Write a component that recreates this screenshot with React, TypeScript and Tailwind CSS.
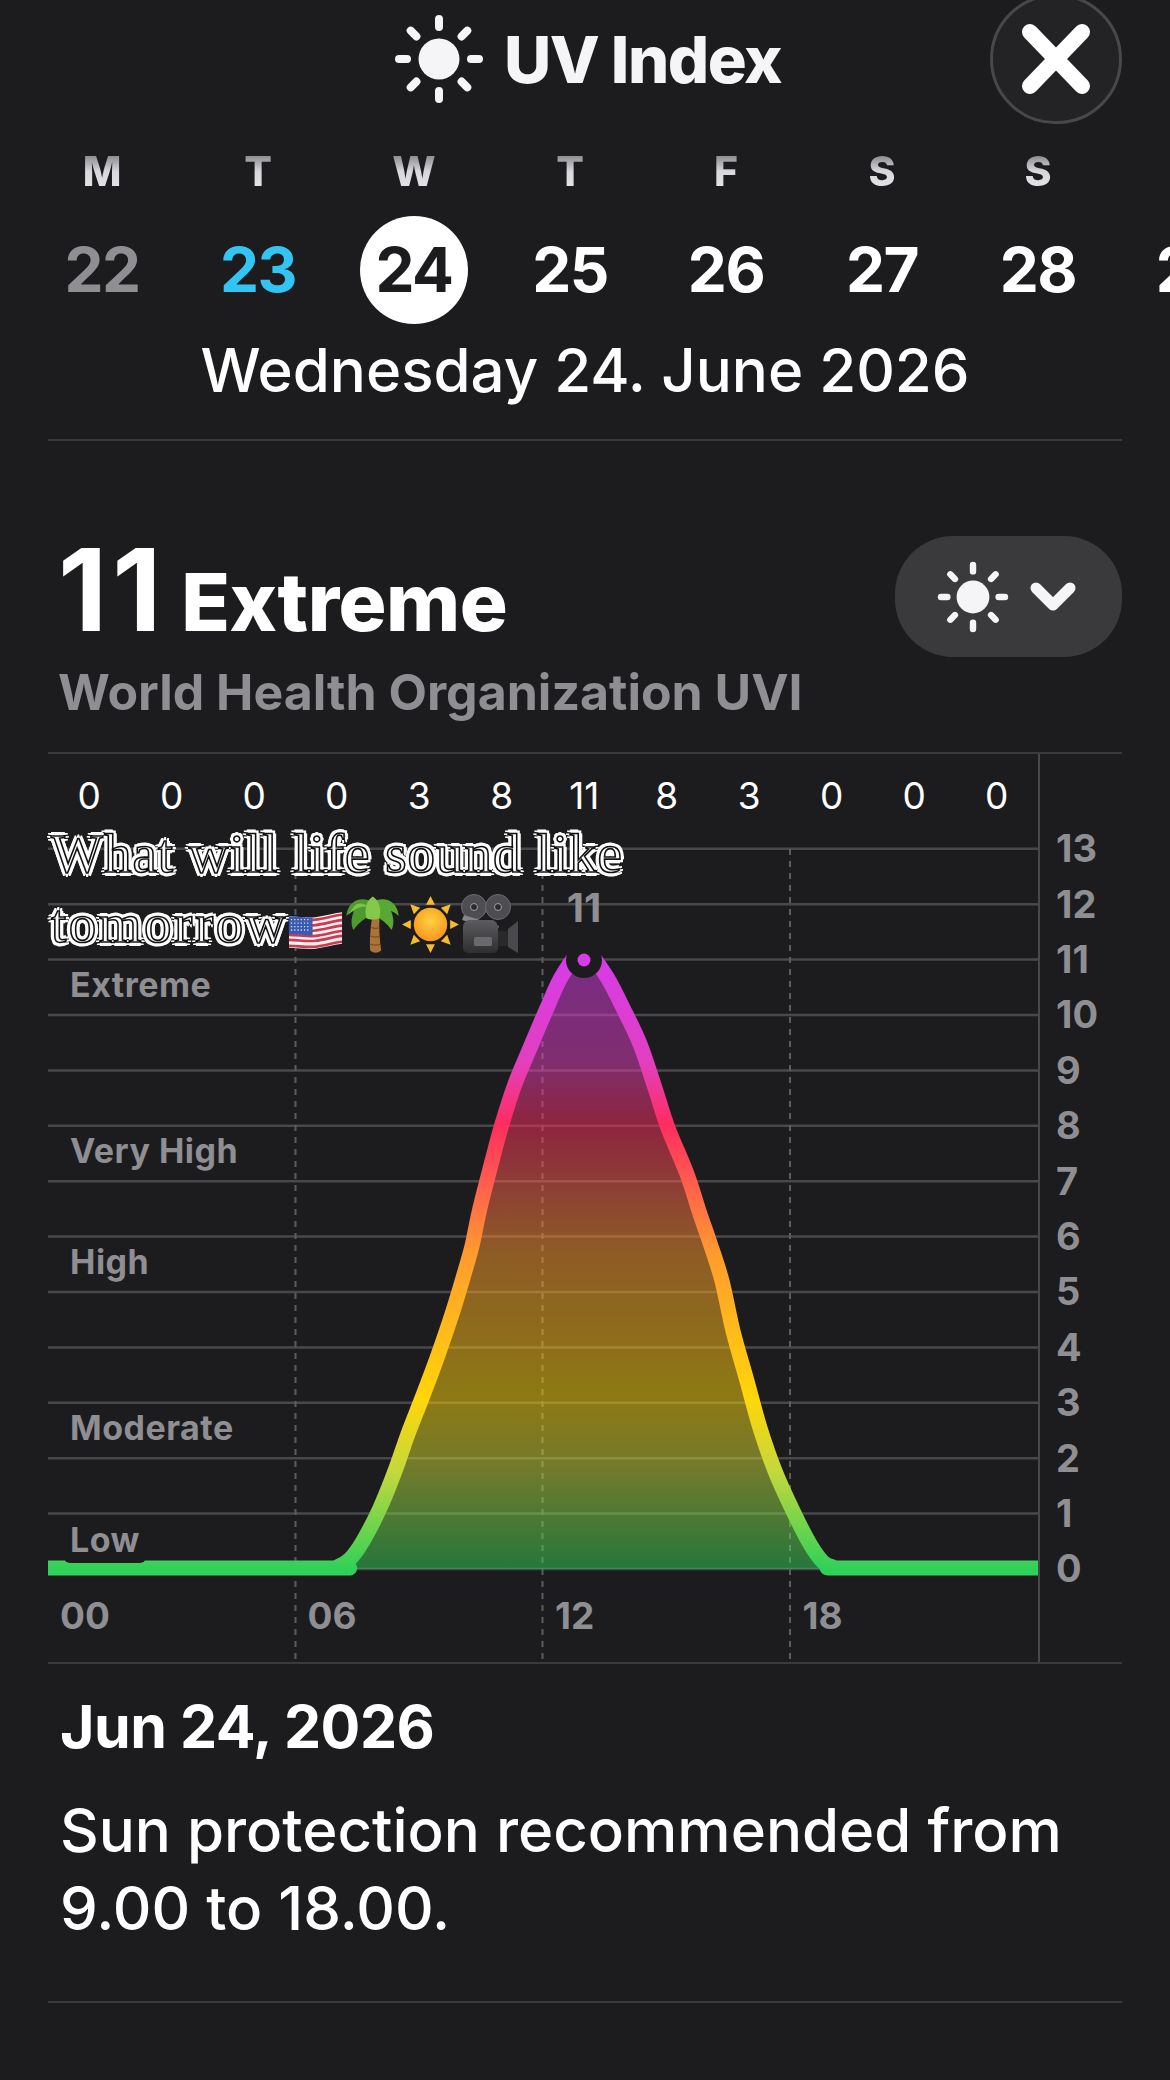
import React from 'react';

const DAYS = [
  { l: 'M', d: '22', c: 'text-[#8e8e93]' },
  { l: 'T', d: '23', c: 'text-[#32c5f4]' },
  { l: 'W', d: '24', c: 'text-[#1c1c1e]', active: true },
  { l: 'T', d: '25', c: 'text-white' },
  { l: 'F', d: '26', c: 'text-white' },
  { l: 'S', d: '27', c: 'text-white' },
  { l: 'S', d: '28', c: 'text-white' },
  { l: '', d: '29', c: 'text-white' },
];
const HOURLY = [0, 0, 0, 0, 3, 8, 11, 8, 3, 0, 0, 0];
const SCALE = [13, 12, 11, 10, 9, 8, 7, 6, 5, 4, 3, 2, 1, 0];
const BANDS = [
  { t: 'Extreme', top: 'top-[212px]' },
  { t: 'Very High', top: 'top-[378px]' },
  { t: 'High', top: 'top-[489px]' },
  { t: 'Moderate', top: 'top-[655px]' },
  { t: 'Low', top: 'top-[767px]' },
];

// centre line of the curve, traced in page coordinates
const CURVE: [number, number][] = [
  [48, 1567], [326, 1567], [337, 1566], [350, 1558], [363, 1540], [380, 1507], [395, 1470], [408, 1433], [422, 1397],
  [437, 1357], [453, 1310], [465, 1270], [472, 1245], [480, 1207], [492, 1160], [502, 1123], [515, 1083], [530, 1047],
  [547, 1007], [563, 973], [584, 950], [605, 973], [623, 1007], [640, 1043], [655, 1087], [668, 1127], [687, 1173],
  [700, 1213], [710, 1242], [722, 1280], [733, 1330], [747, 1380], [760, 1427], [775, 1470], [793, 1510], [810, 1543],
  [823, 1561], [833, 1566], [845, 1567], [1038, 1567],
];

function smooth(pts: [number, number][]) {
  let d = `M${pts[0][0]} ${pts[0][1]}`;
  for (let i = 0; i < pts.length - 1; i++) {
    const p0 = pts[Math.max(i - 1, 0)];
    const p1 = pts[i];
    const p2 = pts[i + 1];
    const p3 = pts[Math.min(i + 2, pts.length - 1)];
    const c1x = p1[0] + (p2[0] - p0[0]) / 6;
    const c1y = p1[1] + (p2[1] - p0[1]) / 6;
    const c2x = p2[0] - (p3[0] - p1[0]) / 6;
    const c2y = p2[1] - (p3[1] - p1[1]) / 6;
    d += `C${c1x} ${c1y} ${c2x} ${c2y} ${p2[0]} ${p2[1]}`;
  }
  return d;
}

const SunIcon = ({ className }: { className: string }) => (
  <svg viewBox="0 0 100 100" className={className} fill="#f5f5f7" stroke="#f5f5f7" strokeWidth="8" strokeLinecap="round">
    <circle cx="50" cy="50" r="20.5" stroke="none" />
    <path d="M50 10v8M50 82v8M10 50h8M82 50h8M21.7 21.7l5.7 5.7M72.6 72.6l5.7 5.7M78.3 21.7l-5.7 5.7M27.4 72.6l-5.7 5.7" />
  </svg>
);

const FlagEmoji = () => (
  <svg viewBox="0 0 56 40" className="w-[55px] h-[40px] shrink-0 self-end mb-[9px]">
    <path d="M1 6c9 0 18 2 27 1s18-4 27-5v32c-9 1-18 4-27 5s-18-1-27-1z" fill="#f4f1f1" />
    <g fill="none" stroke="#cf3a50" strokeWidth="2.7">
      <path d="M1 8.5c9 0 18 2 27 1s18-4 27-5" />
      <path d="M1 14c9 0 18 2 27 1s18-4 27-5" />
      <path d="M1 19.5c9 0 18 2 27 1s18-4 27-5" />
      <path d="M1 25c9 0 18 2 27 1s18-4 27-5" />
      <path d="M1 30c9 0 18 2 27 1s18-4 27-5" />
      <path d="M1 36c9 0 18 2 27 1s18-4 27-5" />
    </g>
    <path d="M1 6c8 0 16 1.500 24 1.500v18c-8 0-16-1.500-24-1.500z" fill="#3a5ab0" />
    <path d="M3 9.500h20M3 13h20M3 16.500h20M3 20h20" stroke="#d5def2" strokeWidth="1.300" strokeDasharray="1.300 2" />
  </svg>
);

const PalmEmoji = () => (
  <svg viewBox="0 0 158 172" className="w-[53px] h-[58px] shrink-0 ml-[3px]">
    <path d="M78 66C72 100 70 140 72 165Q88 178 105 165C100 130 98 100 100 66Z" fill="#a8743a" />
    <path d="M76 96q14 6 24 0M73 122q16 6 27 0M72 146q16 6 30 0" stroke="#7d5226" strokeWidth="4" fill="none" />
    <path d="M82 20C42 0 5 18 1 62 9 54 17 49 24 47 14 70 15 88 22 104 34 86 52 72 76 58Z" fill="#4e9a2e" />
    <path d="M76 20c40-20 78-2 81 42-8-8-16-13-23-15 10 23 9 41 2 57-12-18-30-32-54-46Z" fill="#5aa834" />
    <path d="M30 28C20 38 12 50 8 58 24 40 44 32 66 34 56 26 42 22 30 28Z" fill="#7cc243" />
    <path d="M80 4C64 14 54 34 60 68c10 6 30 6 40 0C106 34 96 14 80 4Z" fill="#84c94a" />
  </svg>
);

const SunEmoji = () => (
  <svg viewBox="0 0 58 58" className="w-[57px] h-[57px] shrink-0 ml-[3px]">
    <defs>
      <radialGradient id="sunCore" cx="0.5" cy="0.4" r="0.65">
        <stop offset="0" stopColor="#ffd23f" />
        <stop offset="1" stopColor="#f78f1e" />
      </radialGradient>
    </defs>
    <path d="M29 0l4.500 9h-9zM29 58l-4.500-9h9zM0 29l9-4.500v9zM58 29l-9 4.500v-9zM8.500 8.500l10 3.500-6.500 6.500zM49.500 49.500l-10-3.500 6.500-6.500zM49.500 8.500l-3.500 10-6.500-6.500zM8.500 49.500l3.500-10 6.500 6.500z" fill="#f7bc2e" />
    <circle cx="29" cy="29" r="18" fill="#1c1c1e" />
    <circle cx="29" cy="29" r="17" fill="url(#sunCore)" />
  </svg>
);

const CameraEmoji = () => (
  <svg viewBox="0 0 58 60" className="w-[60px] h-[60px] shrink-0 ml-[1px]">
    <defs>
      <linearGradient id="camBody" x1="0" y1="0" x2="0" y2="1">
        <stop offset="0" stopColor="#5c5c60" />
        <stop offset="1" stopColor="#2e2e30" />
      </linearGradient>
    </defs>
    <circle cx="13" cy="13" r="12.500" fill="#4e4e52" stroke="#6c6c70" />
    <circle cx="37" cy="13" r="12.500" fill="#4e4e52" stroke="#6c6c70" />
    <circle cx="13" cy="13" r="3.500" fill="#2c2c2e" stroke="#a0a0a5" />
    <circle cx="37" cy="13" r="3.500" fill="#2c2c2e" stroke="#a0a0a5" />
    <path d="M3 21l35 11-2 5L1 26z" fill="#85858a" />
    <path d="M2 33c0-4 3-7 6-7h23c3 0 6 4 6 8v20c0 3-2 5-5 5H8c-3 0-6-2-6-5z" fill="url(#camBody)" />
    <rect x="13" y="43" width="18" height="9" rx="1.500" fill="#6a6a6e" />
    <path d="M37 37h10v15H37z" fill="#29292b" />
    <path d="M47 35l10-8v32l-10-6z" fill="#4a4a4e" />
  </svg>
);

const Sticker = () => (
  <div className="absolute left-[3px] top-[65px] font-['Liberation_Serif',serif] text-[55px] leading-[70px] tracking-[1px] text-white whitespace-nowrap [-webkit-text-stroke:1.6px_#111] [text-shadow:4px_0_0_#fff,-4px_0_0_#fff,0_4px_0_#fff,0_-4px_0_#fff,3px_3px_0_#fff,-3px_3px_0_#fff,3px_-3px_0_#fff,-3px_-3px_0_#fff]">
    <div>What will life sound like</div>
    <div className="flex items-center h-[70px]">
      <span className="tracking-[2.5px]">tomorrow</span>
      <FlagEmoji />
      <PalmEmoji />
      <SunEmoji />
      <CameraEmoji />
    </div>
  </div>
);

const Chart = () => {
  const path = smooth(CURVE);
  return (
    <svg viewBox="48 753 990 910" className="absolute inset-0 w-[990px] h-[910px]">
      <defs>
        <linearGradient id="uvi" gradientUnits="userSpaceOnUse" x1="0" y1="959" x2="0" y2="1568">
          <stop offset="0" stopColor="#d63ce8" />
          <stop offset="0.166" stopColor="#e23fc0" />
          <stop offset="0.27" stopColor="#ff2d5f" />
          <stop offset="0.36" stopColor="#ff5a50" />
          <stop offset="0.48" stopColor="#ff9a2e" />
          <stop offset="0.72" stopColor="#ffd60a" />
          <stop offset="0.84" stopColor="#c4d83c" />
          <stop offset="1" stopColor="#30d158" />
        </linearGradient>
      </defs>
      {SCALE.map((v) => (
        <line key={v} x1="48" x2="1038" y1={1568 - v * 55.4} y2={1568 - v * 55.4} stroke="#48484a" strokeWidth="2.5" />
      ))}
      {[295.5, 542.5, 790].map((x) => (
        <line key={x} x1={x} x2={x} y1="848" y2="1663" stroke="#5c5c60" strokeWidth="2" strokeDasharray="6 6" />
      ))}
      <path d={`${path}L1038 1568L48 1568Z`} fill="url(#uvi)" fillOpacity="0.5" />
      <path d={path} fill="none" stroke="url(#uvi)" strokeWidth="15" />
      <circle cx="584" cy="959" r="18" fill="#1c1c1e" />
      <circle cx="584" cy="959" r="6.5" fill="#d63ce8" />
    </svg>
  );
};

export default function App() {
  return (
    <div className="relative w-[1170px] h-[2080px] overflow-hidden bg-[#1c1c1e] text-white font-['Inter',sans-serif]">
      <header className="relative h-[118px] flex items-center justify-center gap-[15px]">
        <SunIcon className="w-[100px] h-[100px]" />
        <h1 className="text-[65px] font-extrabold tracking-[-1.5px] leading-none text-[#f5f5f7]">UV Index</h1>
        <button className="absolute right-[48px] top-[-6px] w-[132px] h-[130px] rounded-full bg-[#232326] border-[3px] border-[#48484a] flex items-center justify-center">
          <svg viewBox="0 0 80 80" className="w-[80px] h-[80px]" stroke="#fff" strokeWidth="16" strokeLinecap="round">
            <path d="M14 13l52 54M66 13L14 67" />
          </svg>
        </button>
      </header>

      <div className="mt-[30px] ml-[24px] flex h-[46px]">
        {DAYS.map((day, i) => (
          <div key={i} className="w-[156px] shrink-0 flex items-center justify-center text-[41px] font-extrabold leading-none">
            <span className="bg-gradient-to-b from-[#77777b] via-[#d8d8dc] to-[#e5e5ea] bg-clip-text text-transparent">{day.l}</span>
          </div>
        ))}
      </div>

      <div className="mt-[22px] ml-[24px] flex h-[108px]">
        {DAYS.map((day) => (
          <div key={day.d} className="w-[156px] shrink-0 flex items-center justify-center">
            <div className={`w-[108px] h-[108px] rounded-full flex items-center justify-center text-[62px] font-bold tracking-[-1.5px] leading-none ${day.active ? 'bg-white' : ''} ${day.c}`}>
              {day.d}
            </div>
          </div>
        ))}
      </div>

      <div className="mt-[10px] h-[72px] text-center text-[60px] font-medium leading-[72px]">Wednesday 24. June 2026</div>

      <div className="mx-[48px] mt-[33px] h-[2px] bg-[#3a3a3c]" />

      <section className="mx-[48px] mt-[95px] flex items-start justify-between h-[216px]">
        <div className="pl-[10px]">
          <div className="flex items-baseline gap-[15px] h-[108px]">
            <span className="text-[114px] font-bold tracking-[5px] leading-[108px]">11</span>
            <span className="text-[80px] font-extrabold tracking-[-0.5px] leading-none">Extreme</span>
          </div>
          <div className="mt-[18px] text-[50px] font-bold leading-[60px] text-[#8e8e93] whitespace-nowrap">World Health Organization UVI</div>
        </div>
        <div className="w-[227px] h-[121px] rounded-[58px] bg-[#3a3a3c] flex items-center pl-[38px] gap-[17px]">
          <SunIcon className="w-[80px] h-[80px]" />
          <svg viewBox="0 0 46 30" className="w-[46px] h-[30px]" fill="none" stroke="#f5f5f7" strokeWidth="11" strokeLinecap="round" strokeLinejoin="round">
            <path d="M6 6l17 17L40 6" />
          </svg>
        </div>
      </section>

      <section className="mx-[48px] h-[912px] border-y-2 border-[#3a3a3c] flex">
        <div className="relative w-[990px] flex flex-col justify-between">
          <Chart />
          <div className="relative grid grid-cols-12 pt-[18px]">
            {HOURLY.map((v, i) => (
              <span key={i} className="text-center text-[37px] font-normal leading-[48px]">{v}</span>
            ))}
          </div>
          <div className="relative grid grid-cols-4 pb-[26px]">
            {['00', '06', '12', '18'].map((t) => (
              <span key={t} className="pl-[12px] text-[37px] font-bold leading-[40px] text-[#8e8e93]">{t}</span>
            ))}
          </div>
          {BANDS.map((b) => (
            <span key={b.t} className={`absolute left-[16px] px-[6px] pb-[4px] rounded-[6px] bg-[#1c1c1e] text-[34px] font-bold tracking-[0.5px] leading-[38px] text-[#8e8e93] ${b.top}`}>{b.t}</span>
          ))}
          <span className="absolute left-[536px] top-[134px] w-[0px] flex justify-center text-[40px] font-bold leading-[40px] text-[#8e8e93]">11</span>
          <Sticker />
        </div>
        <div className="flex-1 border-l-2 border-[#48484a] pt-[67px] pl-[16px]">
          {SCALE.map((v) => (
            <div key={v} className="h-[55.4px] flex items-center text-[38px] font-bold text-[#8e8e93]">{v}</div>
          ))}
        </div>
      </section>

      <section className="px-[60px] pt-[27px]">
        <h2 className="text-[59px] font-bold tracking-[-0.5px] leading-[72px]">Jun 24, 2026</h2>
        <p className="mt-[28px] text-[60px] font-medium leading-[78px]">
          Sun protection recommended from
          <br />
          9.00 to 18.00.
        </p>
      </section>

      <div className="mx-[48px] mt-[54px] h-[2px] bg-[#3a3a3c]" />
    </div>
  );
}
